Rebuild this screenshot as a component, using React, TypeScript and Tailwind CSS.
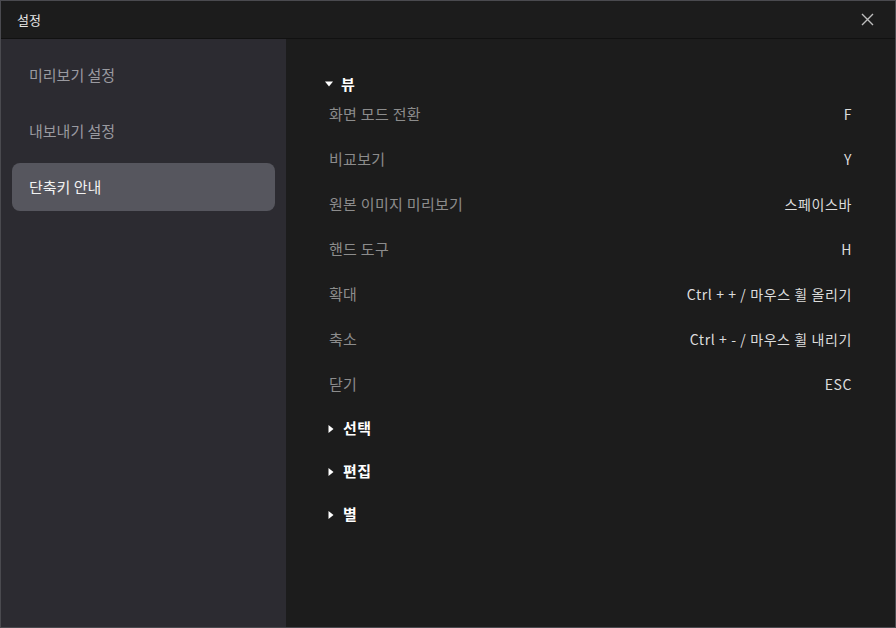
import { useState } from "react";

const font = { fontFamily: '"Noto Sans CJK KR", "Noto Sans", sans-serif' };

const menu = ["미리보기 설정", "내보내기 설정", "단축키 안내"];

const viewShortcuts: [string, string][] = [
  ["화면 모드 전환", "F"],
  ["비교보기", "Y"],
  ["원본 이미지 미리보기", "스페이스바"],
  ["핸드 도구", "H"],
  ["확대", "Ctrl + + / 마우스 휠 올리기"],
  ["축소", "Ctrl + - / 마우스 휠 내리기"],
  ["닫기", "ESC"],
];

function Caret({ open }: { open: boolean }) {
  return (
    <svg width="8" height="8" viewBox="0 0 8 8" className="shrink-0">
      {open ? <path d="M0 1.5h8L4 6.5z" fill="#ffffff" /> : <path d="M1.5 0v8L6.5 4z" fill="#ffffff" />}
    </svg>
  );
}

export default function App() {
  const [active, setActive] = useState(2);

  return (
    <div className="flex h-[628px] w-[896px] flex-col border border-[#4a4a4f] bg-[#1c1c1c]" style={font}>
      <div className="flex h-[38px] shrink-0 items-center justify-between border-b border-[#111111] pl-4 pr-[21px]">
        <span className="text-[13px] text-[#e6e6e6]">설정</span>
        <svg width="13" height="13" viewBox="0 0 13 13">
          <path d="M1 1l11 11M12 1L1 12" stroke="#bdbdbd" strokeWidth="1.4" />
        </svg>
      </div>

      <div className="flex min-h-0 flex-1">
        <div className="flex w-[285px] shrink-0 flex-col gap-2 bg-[#2c2b31] px-[11px] pt-3">
          {menu.map((item, i) => (
            <button
              key={item}
              onClick={() => setActive(i)}
              className={`flex h-12 items-center rounded-lg pl-[17px] text-left text-[15px] ${
                i === active ? "bg-[#56565e] text-[#f2f2f2]" : "text-[#9a9aa0]"
              }`}
            >
              {item}
            </button>
          ))}
        </div>

        <div className="flex-1 pl-[39px] pr-[43px] pt-[35px]">
          <div className="flex h-5 items-center gap-[8px] text-[15px] font-bold tracking-[0.5px] text-white">
            <Caret open />
            <span>뷰</span>
          </div>
          <div className="mt-[5px] flex flex-col">
            {viewShortcuts.map(([label, keys]) => (
              <div key={label} className="flex h-[45px] items-center justify-between pb-[15px] pl-[4px]">
                <span className="text-[15px] tracking-[0.3px] text-[#8c8c8c]">{label}</span>
                <span className="text-[14px] tracking-[0.6px] text-[#dcdcdc]">{keys}</span>
              </div>
            ))}
          </div>
          <div className="-mt-[7px] flex flex-col">
            {["선택", "편집", "별"].map((g) => (
              <div key={g} className="flex h-[43px] items-center gap-[8px] pl-[2px] text-[15px] font-bold tracking-[0.5px] text-white">
                <Caret open={false} />
                <span>{g}</span>
              </div>
            ))}
          </div>
        </div>
      </div>
    </div>
  );
}
